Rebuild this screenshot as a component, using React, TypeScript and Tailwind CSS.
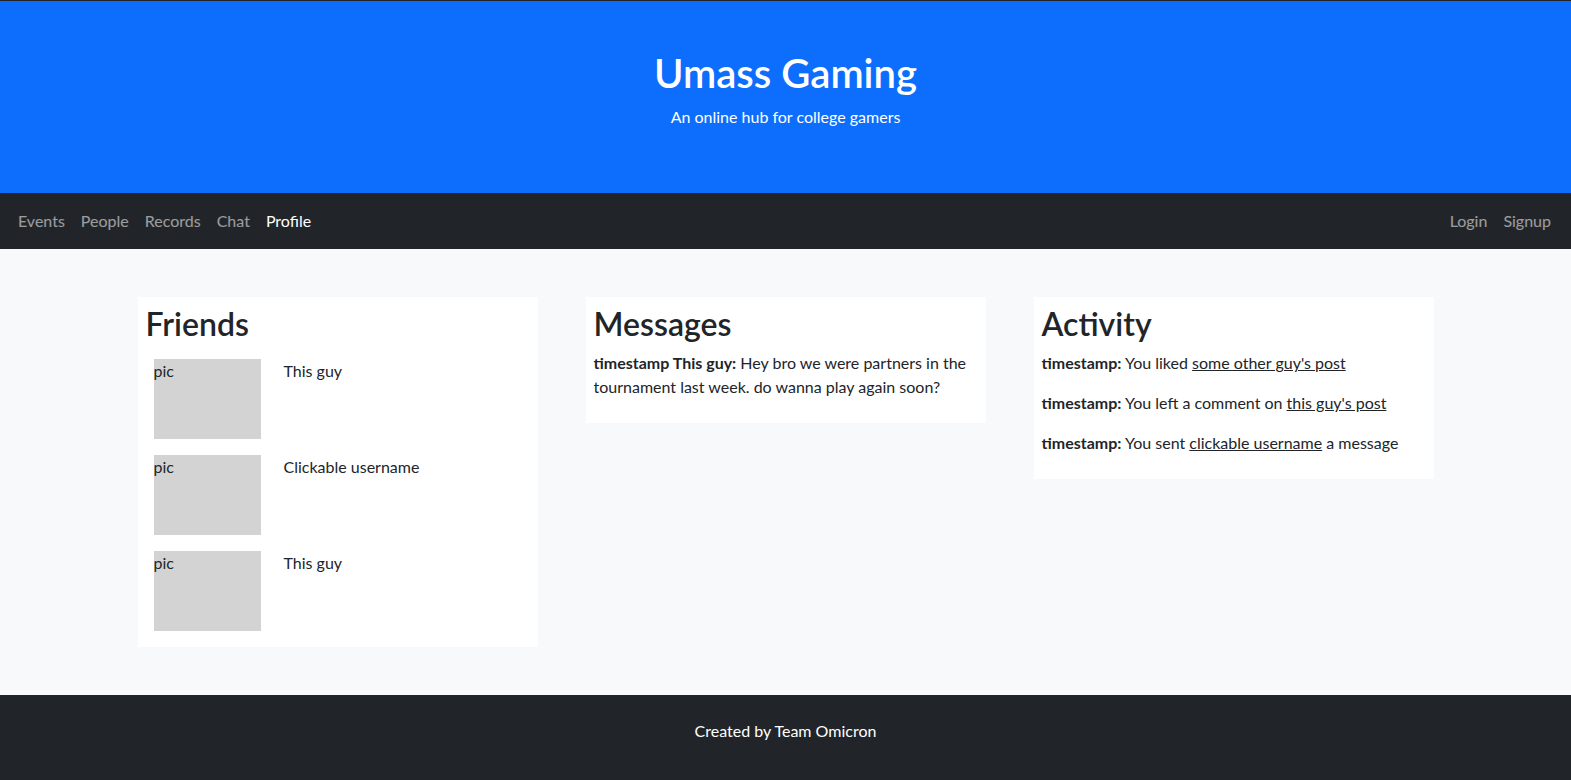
import React from "react";

const navLeft = ["Events", "People", "Records", "Chat"];

function Card({ title, children }: { title: string; children: React.ReactNode }) {
  return (
    <div className="bg-white p-2">
      <h2 className="mb-2 text-[32px] font-semibold leading-[1.2]">{title}</h2>
      {children}
    </div>
  );
}

function Friend({ name }: { name: string }) {
  return (
    <div className="flex py-2 pl-2">
      <div className="h-20 w-[107px] shrink-0 bg-[#d3d3d3]">pic</div>
      <div className="ml-[23px]">{name}</div>
    </div>
  );
}

function Act({ before, link, after }: { before: string; link: string; after?: string }) {
  return (
    <p className="mb-4">
      <b className="font-bold">timestamp:</b> {before}{" "}
      <a href="#" className="text-[#212529] underline">
        {link}
      </a>
      {after ? ` ${after}` : ""}
    </p>
  );
}

export default function App() {
  return (
    <div className="font-['Lato',sans-serif] text-base leading-6 text-[#212529]">
      <header className="border-t border-[#212529] bg-[#0d6efd] py-12 text-center text-white">
        <h1 className="mb-2 text-[40px] font-semibold leading-[1.2]">Umass Gaming</h1>
        <p className="mb-4">An online hub for college gamers</p>
      </header>
      <nav className="flex h-14 items-center justify-between bg-[#212529] pl-[10px] pr-3">
        <div className="flex">
          {navLeft.map((n) => (
            <a key={n} href="#" className="px-2 py-2 text-white/55">
              {n}
            </a>
          ))}
          <a href="#" className="px-2 py-2 text-white">
            Profile
          </a>
        </div>
        <div className="flex">
          <a href="#" className="px-2 py-2 text-white/55">
            Login
          </a>
          <a href="#" className="px-2 py-2 text-white/55">
            Signup
          </a>
        </div>
      </nav>
      <main className="bg-[#f8f9fa] py-12">
        <div className="mx-auto grid w-[1296px] grid-cols-3 items-start gap-12">
          <Card title="Friends">
            <Friend name="This guy" />
            <Friend name="Clickable username" />
            <Friend name="This guy" />
          </Card>
          <Card title="Messages">
            <p className="mb-4">
              <b className="font-bold">timestamp This guy:</b> Hey bro we were partners in the tournament last week. do
              wanna play again soon?
            </p>
          </Card>
          <Card title="Activity">
            <Act before="You liked" link="some other guy's post" />
            <Act before="You left a comment on" link="this guy's post" />
            <Act before="You sent" link="clickable username" after="a message" />
          </Card>
        </div>
      </main>
      <footer className="bg-[#212529] py-6 text-center text-white">
        <p className="mb-4">Created by Team Omicron</p>
      </footer>
    </div>
  );
}
